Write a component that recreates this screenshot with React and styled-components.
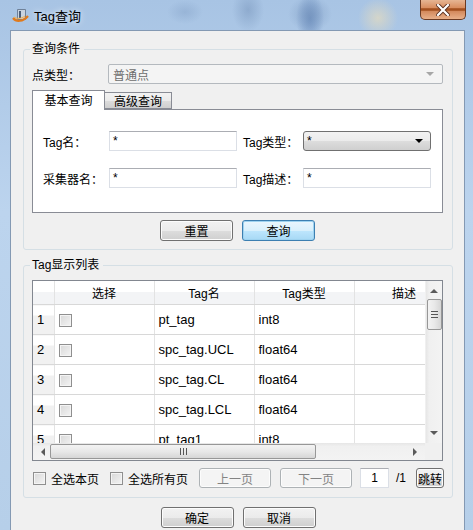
import React from 'react';
import styled, { createGlobalStyle } from 'styled-components';

const GlobalStyle = createGlobalStyle`
  html, body {
    margin: 0;
    padding: 0;
    overflow: hidden;
  }
  body {
    font-family: "Liberation Sans", "Noto Sans CJK SC", sans-serif;
    font-size: 12px;
    color: #000;
  }
`;

const Desktop = styled.div`
  width: 473px;
  height: 530px;
  overflow: hidden;
  display: flex;
  flex-direction: column;
  background:
    radial-gradient(ellipse 22px 18px at 310px 14px, rgba(120, 150, 190, 0.6), transparent),
    radial-gradient(ellipse 16px 22px at 248px 10px, rgba(110, 140, 180, 0.45), transparent),
    radial-gradient(ellipse 14px 26px at 310px 18px, rgba(60, 100, 160, 0.5), transparent),
    radial-gradient(ellipse 20px 20px at 378px 18px, rgba(230, 220, 190, 0.7), transparent),
    radial-gradient(ellipse 18px 12px at 185px 12px, rgba(120, 150, 190, 0.35), transparent),
    linear-gradient(180deg, #a8c4e4 0%, #bcd4ee 40%, #b6cfe9 100%);
`;

const TitleBar = styled.div`
  height: 30px;
  flex: none;
  display: flex;
  align-items: center;
  padding-left: 12px;
`;

const Title = styled.span`
  margin-left: 5px;
  font-size: 13px;
  color: #000;
  text-shadow: 0 0 6px rgba(255, 255, 255, 0.9);
`;

const CloseButton = styled.div`
  align-self: flex-start;
  margin-left: auto;
  margin-right: 7px;
  width: 46px;
  height: 20px;
  box-sizing: border-box;
  border: 1px solid #6b3a22;
  border-top: none;
  border-radius: 0 0 5px 5px;
  background: linear-gradient(
    180deg,
    #e6b593 0%,
    #d98e60 40%,
    #a4501f 46%,
    #a4501f 54%,
    #d48a5d 60%,
    #e8b08a 100%
  );
  display: flex;
  align-items: center;
  justify-content: center;
`;

const Client = styled.div`
  flex: 1;
  margin: 0 8px 0 10px;
  border: 1px solid #8499b3;
  border-bottom: none;
  background: #f0f0f0;
  padding: 11px 11px 0 12px;
`;

const Group = styled.fieldset`
  margin: ${(p) => (p.$gap ? '8px 0 0' : '0')};
  padding: 8px 9px ${(p) => p.$bottom}px 8px;
  border: 1px solid #d5dfe5;
  border-radius: 3px;
  min-width: 0;
`;

const Legend = styled.legend`
  padding: 0 4px 0 2px;
  margin-left: -2px;
  font-size: 12px;
  line-height: 14px;
`;

const FieldRow = styled.div`
  display: grid;
  grid-template-columns: 76px 1fr;
  align-items: center;
`;

const Label = styled.span`
  white-space: nowrap;
  padding-left: ${(p) => p.$indent || 0}px;
`;

const DisabledSelect = styled.div`
  height: 20px;
  box-sizing: border-box;
  border: 1px solid #b4b9be;
  border-radius: 2px;
  background: #f4f4f4;
  color: #6d6d6d;
  display: flex;
  align-items: center;
  padding: 0 8px 0 4px;
  justify-content: space-between;
`;

const Arrow = styled.span`
  width: 0;
  height: 0;
  border-left: 4px solid transparent;
  border-right: 4px solid transparent;
  border-top: 4px solid ${(p) => p.$color};
`;

const TabBar = styled.div`
  margin-top: 6px;
  height: 19px;
  display: flex;
  align-items: flex-end;
`;

const Tab = styled.div`
  position: relative;
  z-index: ${(p) => (p.$active ? 1 : 0)};
  box-sizing: border-box;
  width: ${(p) => (p.$active ? 73 : 68)}px;
  height: ${(p) => (p.$active ? 20 : 17)}px;
  margin-bottom: ${(p) => (p.$active ? -1 : 0)}px;
  margin-left: ${(p) => (p.$active ? 0 : -1)}px;
  border: 1px solid #898c95;
  border-bottom: ${(p) => (p.$active ? 'none' : '1px solid #898c95')};
  background: ${(p) => (p.$active ? '#fff' : 'linear-gradient(180deg, #f2f2f2 0%, #ebebeb 50%, #dddddd 51%, #cfcfcf 100%)')};
  display: flex;
  align-items: center;
  justify-content: center;
  padding-bottom: ${(p) => (p.$active ? 2 : 0)}px;
`;

const TabPane = styled.div`
  height: 104px;
  box-sizing: border-box;
  border: 1px solid #898c95;
  background: #fff;
  padding: 21px 10px 0 10px;
  display: grid;
  grid-template-columns: 66px 128px 66px 128px;
  grid-auto-rows: 20px;
  row-gap: 17px;
  align-items: center;
`;

const TextInput = styled.div`
  height: 20px;
  box-sizing: border-box;
  border: 1px solid #dbdfe6;
  border-top-color: #abadb3;
  background: #fff;
  display: flex;
  align-items: center;
  padding-left: 3px;
`;

const PageInput = styled.div`
  width: 29px;
  height: 20px;
  margin-left: 8px;
  box-sizing: border-box;
  border: 1px solid #dbdfe6;
  border-top-color: #abadb3;
  background: #fff;
  display: flex;
  align-items: center;
  justify-content: center;
  flex: none;
`;

const ComboButton = styled.div`
  height: 20px;
  box-sizing: border-box;
  border: 1px solid #707070;
  border-radius: 3px;
  background: linear-gradient(180deg, #f2f2f2 0%, #ebebeb 50%, #dddddd 51%, #cfcfcf 100%);
  display: flex;
  align-items: center;
  justify-content: space-between;
  padding: 0 7px 0 3px;
`;

const ButtonRow = styled.div`
  margin-top: ${(p) => p.$top}px;
  display: flex;
  justify-content: center;
  gap: 9px;
`;

const Button = styled.div`
  width: ${(p) => p.$w || 73}px;
  height: ${(p) => p.$h || 21}px;
  box-sizing: border-box;
  border: 1px solid ${(p) => (p.$focus ? '#3c7fb1' : p.$disabled ? '#adb2b5' : '#707070')};
  border-radius: 3px;
  background: ${(p) =>
    p.$disabled
      ? '#f4f4f4'
      : p.$focus
      ? 'linear-gradient(180deg, #eaf6fd 0%, #d9f0fc 50%, #bee6fd 51%, #a7d9f5 100%)'
      : 'linear-gradient(180deg, #f2f2f2 0%, #ebebeb 50%, #dddddd 51%, #cfcfcf 100%)'};
  box-shadow: ${(p) => (p.$focus ? 'inset 0 0 0 1px #9fd3f0' : 'inset 0 0 0 1px #fcfcfc')};
  color: ${(p) => (p.$disabled ? '#838383' : '#000')};
  display: flex;
  align-items: center;
  justify-content: center;
  flex: none;
  margin-left: ${(p) => p.$ml || 0}px;
`;

const TableFrame = styled.div`
  height: 181px;
  box-sizing: border-box;
  border: 1px solid #828790;
  background: #fff;
  display: grid;
  grid-template-columns: 1fr 17px;
  grid-template-rows: 1fr 17px;
  overflow: hidden;
`;

const Viewport = styled.div`
  overflow: hidden;
  min-width: 0;
`;

const Grid = styled.table`
  border-collapse: collapse;
  table-layout: fixed;
  width: 421px;
  font-family: "Liberation Sans", "Noto Sans CJK SC", sans-serif;
  font-size: 12px;
`;

const HeadCell = styled.th`
  height: 23px;
  padding: 0;
  font-weight: normal;
  text-align: center;
  border-right: 1px solid #e3e3e3;
  border-bottom: 1px solid #d8d8d8;
  background: linear-gradient(180deg, #ffffff 0%, #ffffff 48%, #f3f4f6 50%, #f3f4f6 100%);
`;

const RowHead = styled.td`
  height: 29px;
  padding: 0 0 0 4px;
  font-size: 13px;
  border-right: 1px solid #e3e3e3;
  border-bottom: 1px solid #d8d8d8;
  background: linear-gradient(180deg, #ffffff 0%, #ffffff 33%, #f1f1f1 34%, #f1f1f1 100%);
`;

const Cell = styled.td`
  height: 29px;
  padding: 0 0 0 4px;
  font-size: 13px;
  white-space: nowrap;
  overflow: hidden;
  border-right: 1px solid #e3e3e3;
  border-bottom: 1px solid #d8d8d8;
`;

const Check = styled.span`
  display: inline-block;
  vertical-align: middle;
  width: 13px;
  height: 13px;
  box-sizing: border-box;
  border: 1px solid #8f8f8f;
  background: linear-gradient(135deg, #d8d8d8 0%, #f4f4f4 100%);
  box-shadow: inset 0 0 0 1px #f4f4f4;
  flex: none;
`;

const VScroll = styled.div`
  background: linear-gradient(90deg, #e6e6e6 0%, #f0f0f0 20%, #f3f3f3 100%);
  border-left: 1px solid #f0f0f0;
  display: flex;
  flex-direction: column;
  align-items: center;
`;

const HScroll = styled.div`
  background: linear-gradient(180deg, #e6e6e6 0%, #f0f0f0 20%, #f3f3f3 100%);
  display: flex;
  align-items: center;
`;

const ScrollArrow = styled.div`
  width: 17px;
  height: 17px;
  flex: none;
  display: flex;
  align-items: center;
  justify-content: center;
  margin-left: ${(p) => (p.$end ? 'auto' : '0')};
  margin-top: ${(p) => (p.$bottom ? 'auto' : '0')};
`;

const Tri = styled.span`
  width: 0;
  height: 0;
  border: 3px solid transparent;
  ${(p) => `border-${p.$side}: 4px solid #5a5a5a;`}
  ${(p) => (p.$side === 'bottom' || p.$side === 'top' ? 'border-left-width:4px;border-right-width:4px;' : 'border-top-width:4px;border-bottom-width:4px;')}
`;

const Thumb = styled.div`
  box-sizing: border-box;
  border: 1px solid #979797;
  border-radius: 2px;
  background: ${(p) =>
    p.$horizontal
      ? 'linear-gradient(180deg, #f3f3f3 0%, #e8e8e8 50%, #d6d6d6 100%)'
      : 'linear-gradient(90deg, #f3f3f3 0%, #e8e8e8 50%, #d6d6d6 100%)'};
  width: ${(p) => (p.$horizontal ? '266px' : '15px')};
  height: ${(p) => (p.$horizontal ? '15px' : '31px')};
  margin-top: ${(p) => (p.$horizontal ? 0 : 1)}px;
  display: flex;
  align-items: center;
  justify-content: center;
  flex: none;
`;

const Grip = styled.span`
  display: block;
  width: 7px;
  height: 7px;
  background: ${(p) =>
    p.$horizontal
      ? 'repeating-linear-gradient(90deg, #555 0 1px, transparent 1px 3px)'
      : 'repeating-linear-gradient(180deg, #555 0 1px, transparent 1px 3px)'};
`;

const Corner = styled.div`
  background: #f0f0f0;
`;

const Controls = styled.div`
  margin-top: 7px;
  height: 20px;
  display: flex;
  align-items: center;
`;

const CheckLabel = styled.label`
  display: flex;
  align-items: center;
  gap: 5px;
  margin-left: ${(p) => p.$ml || 0}px;
  margin-right: ${(p) => p.$mr || 0}px;
  font-size: 12px;
  white-space: nowrap;
`;

const PageText = styled.span`
  margin: 0 10px 0 7px;
  font-size: 12px;
`;

const rows = [
  { n: 1, name: 'pt_tag', type: 'int8' },
  { n: 2, name: 'spc_tag.UCL', type: 'float64' },
  { n: 3, name: 'spc_tag.CL', type: 'float64' },
  { n: 4, name: 'spc_tag.LCL', type: 'float64' },
  { n: 5, name: 'pt_tag1', type: 'int8' },
];

function AppIcon() {
  return (
    <svg width="17" height="16" viewBox="0 0 17 16">
      <rect x="5" y="2" width="9" height="11" rx="1" fill="#6f8198" />
      <rect x="6" y="3" width="7" height="9" fill="#c9d3df" />
      <rect x="7" y="4" width="2" height="7" fill="#4a5d78" />
      <path d="M1 11 C4 15, 11 15, 16 9" stroke="#e07a1c" strokeWidth="2.2" fill="none" />
      <path d="M2 10 C5 12, 9 12, 13 9" stroke="#f4b04a" strokeWidth="1" fill="none" />
    </svg>
  );
}

function CloseGlyph() {
  return (
    <svg width="14" height="12" viewBox="0 0 14 12">
      <path d="M2 1 L12 11 M12 1 L2 11" stroke="#5b3020" strokeWidth="4" strokeLinecap="square" />
      <path d="M2 1 L12 11 M12 1 L2 11" stroke="#fff" strokeWidth="2.2" strokeLinecap="square" />
    </svg>
  );
}

export default function App() {
  return (
    <Desktop>
      <GlobalStyle />
      <TitleBar>
        <AppIcon />
        <Title>Tag查询</Title>
        <CloseButton>
          <CloseGlyph />
        </CloseButton>
      </TitleBar>
      <Client>
        <Group $bottom={8}>
          <Legend>查询条件</Legend>
          <FieldRow>
            <Label>点类型：</Label>
            <DisabledSelect>
              普通点
              <Arrow $color="#a7a7a7" />
            </DisabledSelect>
          </FieldRow>
          <TabBar>
            <Tab $active>基本查询</Tab>
            <Tab>高级查询</Tab>
          </TabBar>
          <TabPane>
            <Label>Tag名：</Label>
            <TextInput>*</TextInput>
            <Label $indent={6}>Tag类型：</Label>
            <ComboButton>
              *
              <Arrow $color="#000" />
            </ComboButton>
            <Label>采集器名：</Label>
            <TextInput>*</TextInput>
            <Label $indent={6}>Tag描述：</Label>
            <TextInput>*</TextInput>
          </TabPane>
          <ButtonRow $top={7}>
            <Button>重置</Button>
            <Button $focus>查询</Button>
          </ButtonRow>
        </Group>

        <Group $gap $bottom={9}>
          <Legend>Tag显示列表</Legend>
          <TableFrame>
            <Viewport>
              <Grid>
                <colgroup>
                  <col style={{ width: 21 }} />
                  <col style={{ width: 100 }} />
                  <col style={{ width: 100 }} />
                  <col style={{ width: 100 }} />
                  <col style={{ width: 100 }} />
                </colgroup>
                <thead>
                  <tr>
                    <HeadCell />
                    <HeadCell>选择</HeadCell>
                    <HeadCell>Tag名</HeadCell>
                    <HeadCell>Tag类型</HeadCell>
                    <HeadCell>描述</HeadCell>
                  </tr>
                </thead>
                <tbody>
                  {rows.map((r) => (
                    <tr key={r.n}>
                      <RowHead>{r.n}</RowHead>
                      <Cell>
                        <Check />
                      </Cell>
                      <Cell>{r.name}</Cell>
                      <Cell>{r.type}</Cell>
                      <Cell />
                    </tr>
                  ))}
                </tbody>
              </Grid>
            </Viewport>
            <VScroll>
              <ScrollArrow>
                <Tri $side="bottom" />
              </ScrollArrow>
              <Thumb>
                <Grip />
              </Thumb>
              <ScrollArrow $bottom>
                <Tri $side="top" />
              </ScrollArrow>
            </VScroll>
            <HScroll>
              <ScrollArrow>
                <Tri $side="right" />
              </ScrollArrow>
              <Thumb $horizontal>
                <Grip $horizontal />
              </Thumb>
              <ScrollArrow $end>
                <Tri $side="left" />
              </ScrollArrow>
            </HScroll>
            <Corner />
          </TableFrame>
          <Controls>
            <CheckLabel $ml={1} $mr={11}>
              <Check />
              全选本页
            </CheckLabel>
            <CheckLabel $mr={11}>
              <Check />
              全选所有页
            </CheckLabel>
            <Button $disabled $w={72} $h={20}>上一页</Button>
            <Button $disabled $w={72} $h={20} $ml={9}>下一页</Button>
            <PageInput>1</PageInput>
            <PageText>/1</PageText>
            <Button $w={28} $h={20}>跳转</Button>
          </Controls>
        </Group>

        <ButtonRow $top={9}>
          <Button>确定</Button>
          <Button>取消</Button>
        </ButtonRow>
      </Client>
    </Desktop>
  );
}
